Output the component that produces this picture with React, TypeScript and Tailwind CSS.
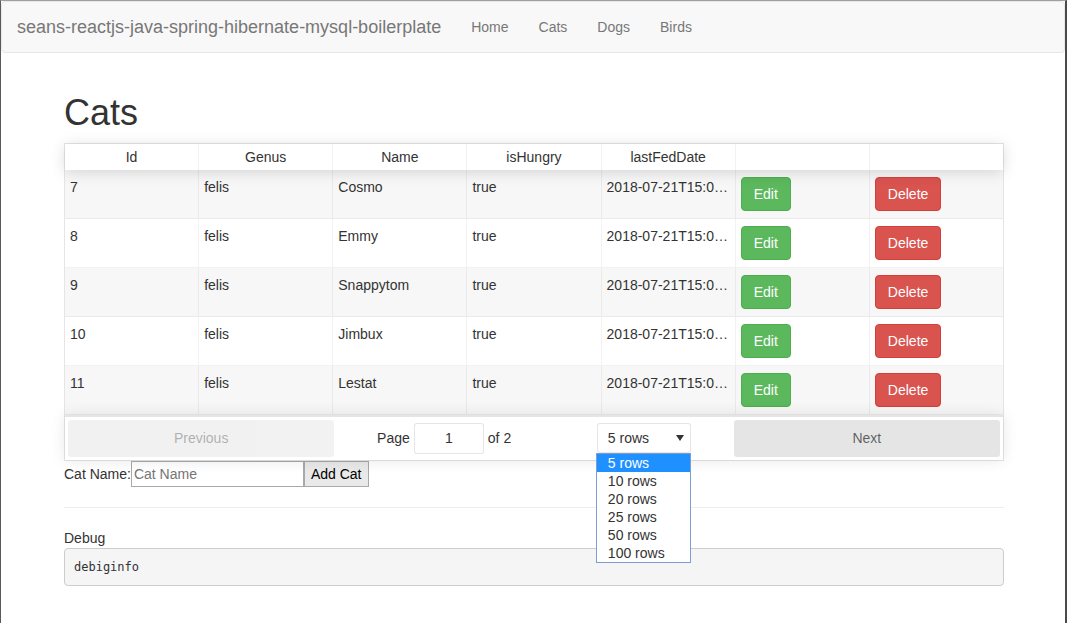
import React from 'react';

const cats = [
  { id: 7, genus: 'felis', name: 'Cosmo' },
  { id: 8, genus: 'felis', name: 'Emmy' },
  { id: 9, genus: 'felis', name: 'Snappytom' },
  { id: 10, genus: 'felis', name: 'Jimbux' },
  { id: 11, genus: 'felis', name: 'Lestat' },
];

const headers = ['Id', 'Genus', 'Name', 'isHungry', 'lastFedDate', '', ''];
const sizes = ['5 rows', '10 rows', '20 rows', '25 rows', '50 rows', '100 rows'];

const Navbar: React.FC = () => (
  <nav className="flex h-[52px] items-center rounded-[4px] border border-[#e7e7e7] bg-[#f8f8f8]">
    <span className="px-[15px] text-[18px] leading-[20px] text-[#777]">
      seans-reactjs-java-spring-hibernate-mysql-boilerplate
    </span>
    <ul className="flex">
      {['Home', 'Cats', 'Dogs', 'Birds'].map((l) => (
        <li key={l} className="px-[15px] py-[15px] leading-[20px] text-[#777]">
          {l}
        </li>
      ))}
    </ul>
  </nav>
);

const CatTable: React.FC = () => (
  <div className="relative flex flex-col border border-black/10">
    {/* header */}
    <div className="relative z-10 flex bg-white shadow-[0_2px_15px_0_rgba(0,0,0,0.15)]">
      {headers.map((h, i) => (
        <div
          key={i}
          className={`min-w-0 flex-1 truncate px-[5px] py-[5px] text-center leading-[16px] ${
            i < headers.length - 1 ? 'border-r border-black/5' : ''
          }`}
        >
          {h || '\u00a0'}
        </div>
      ))}
    </div>

    {/* body */}
    <div className="flex flex-col">
      {cats.map((cat, idx) => (
        <div
          key={cat.id}
          className={`flex border-b border-black/5 ${idx % 2 === 0 ? 'bg-[#f7f7f7]' : 'bg-white'}`}
        >
          <div className="min-w-0 flex-1 truncate border-r border-black/5 px-[5px] py-[7px] leading-[20px]">{cat.id}</div>
          <div className="min-w-0 flex-1 truncate border-r border-black/5 px-[5px] py-[7px] leading-[20px]">{cat.genus}</div>
          <div className="min-w-0 flex-1 truncate border-r border-black/5 px-[5px] py-[7px] leading-[20px]">{cat.name}</div>
          <div className="min-w-0 flex-1 truncate border-r border-black/5 px-[5px] py-[7px] leading-[20px]">true</div>
          <div className="min-w-0 flex-1 truncate border-r border-black/5 px-[5px] py-[7px] leading-[20px]">
            2018-07-21T15:04:53.000+0000
          </div>
          <div className="min-w-0 flex-1 border-r border-black/5 px-[5px] py-[7px]">
            <button className="h-[34px] rounded-[4px] border border-[#4cae4c] bg-[#5cb85c] px-[12px] leading-[20px] text-white">
              Edit
            </button>
          </div>
          <div className="min-w-0 flex-1 px-[5px] py-[7px]">
            <button className="h-[34px] rounded-[4px] border border-[#d43f3a] bg-[#d9534f] px-[12px] leading-[20px] text-white">
              Delete
            </button>
          </div>
        </div>
      ))}
    </div>

    {/* pagination */}
    <div className="relative z-[1] flex items-stretch border-t-2 border-black/10 p-[3px] shadow-[0_0_15px_0_rgba(0,0,0,0.1)]">
      <div className="flex-1">
        <button className="h-full w-full rounded-[3px] bg-black/10 p-[6px] text-black/60 opacity-50">Previous</button>
      </div>
      <div className="flex flex-[1.5] items-center justify-around">
        <span className="mx-[10px] my-[3px] flex items-center whitespace-nowrap">
          Page
          <span className="mx-[4px] flex h-[31px] w-[70px] items-center justify-center rounded-[3px] border border-black/10 bg-white">
            1
          </span>
          of 2
        </span>
        <span className="relative mx-[10px] my-[3px]">
          <span className="flex h-[30px] w-[94px] items-center justify-between rounded-[3px] border border-black/10 bg-white pl-[10px] pr-[6px]">
            <span>5 rows</span>
            <svg width="8" height="6" viewBox="0 0 8 6">
              <path d="M0 0h8L4 6z" fill="#333" />
            </svg>
          </span>
          <ul className="absolute left-[-1px] top-[30px] z-50 w-[95px] border border-[#7b9ed4] bg-white">
            {sizes.map((s, i) => (
              <li
                key={s}
                className={`pl-[11px] text-[14px] leading-[18px] ${i === 0 ? 'bg-[#1e90ff] text-white' : 'text-[#333]'}`}
              >
                {s}
              </li>
            ))}
          </ul>
        </span>
      </div>
      <div className="flex-1">
        <button className="h-[37px] w-full rounded-[3px] bg-black/10 p-[6px] text-black/60">Next</button>
      </div>
    </div>
  </div>
);

export default function App() {
  return (
    <div className="h-[623px] overflow-hidden border-l border-r-2 border-t border-l-[#5a5a5a] border-r-[#4a4a4a] border-t-[#a0a0a0] bg-white font-['Liberation_Sans',Arial,sans-serif] text-[14px] leading-[20px] text-[#333]">
      <Navbar />
      <div className="ml-[63px] w-[940px] pt-[20px]">
        <h1 className="mb-[10px] mt-[20px] text-[36px] leading-[1.1]">Cats</h1>
        <CatTable />

        <div className="flex items-center">
          <label>Cat Name:</label>
          <input
            placeholder="Cat Name"
            className="h-[26px] w-[173px] border border-[#a9a9a9] px-[2px] text-[14px] placeholder:text-[#757575]"
          />
          <button className="h-[26px] border border-[#a9a9a9] bg-[#e9e9e9] px-[6px] text-[14px] text-black">Add Cat</button>
        </div>

        <hr className="my-[20px] border-t border-[#eee]" />

        <div>Debug</div>
        <pre className="rounded-[4px] border border-[#ccc] bg-[#f5f5f5] p-[9px] font-['DejaVu_Sans_Mono',monospace] text-[12px] leading-[18px]">
          debiginfo
        </pre>
      </div>
    </div>
  );
}
